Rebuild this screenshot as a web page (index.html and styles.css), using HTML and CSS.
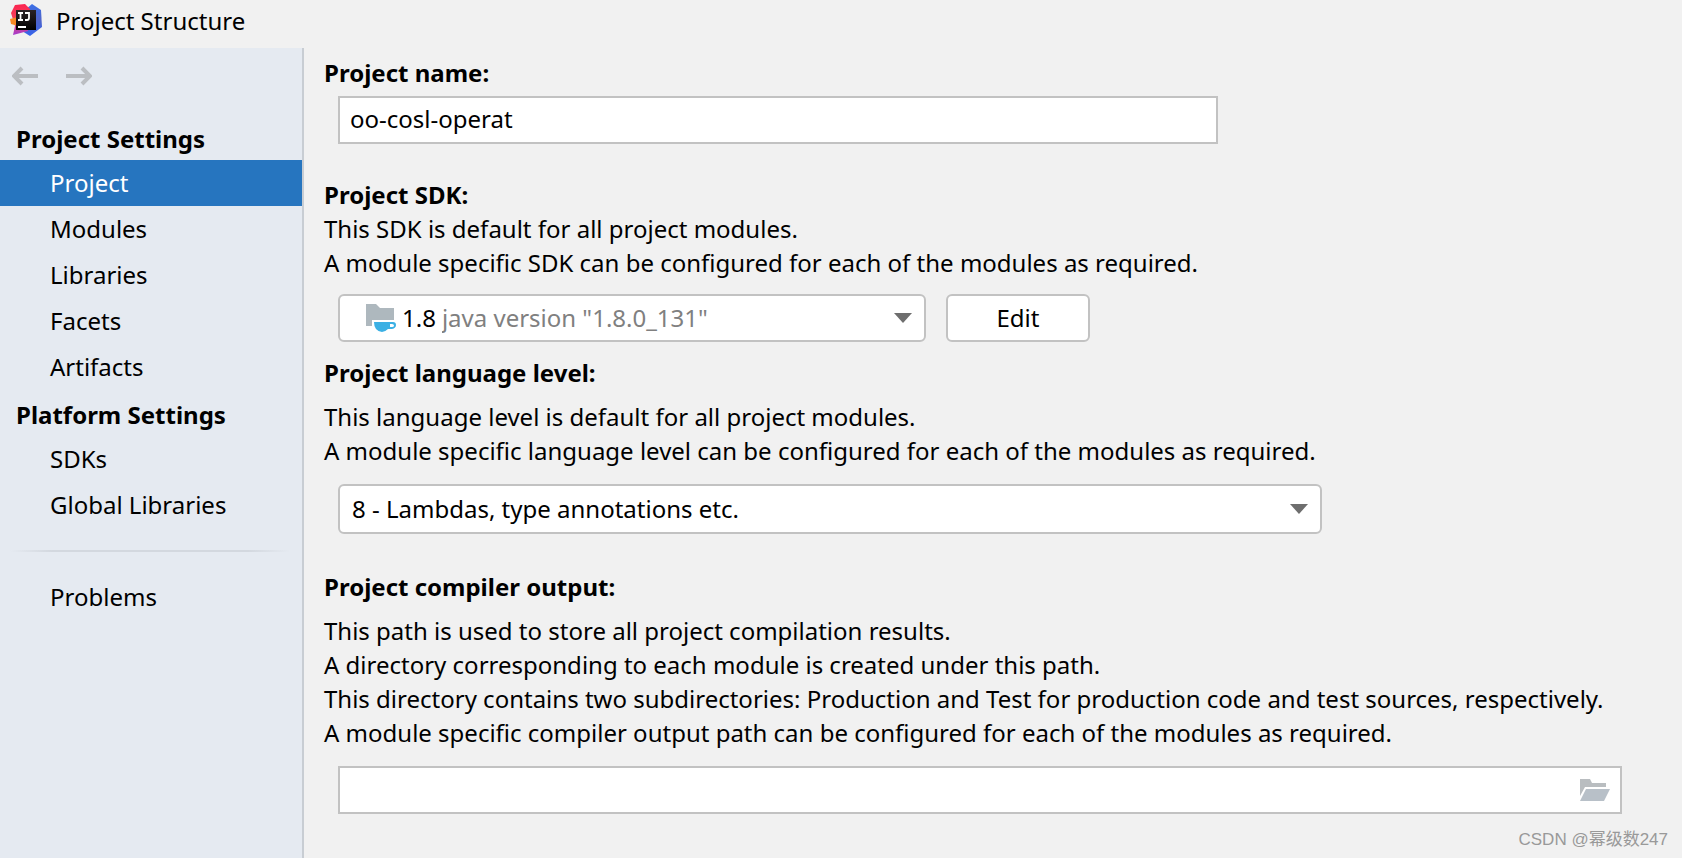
FILE: index.html
```html
<!DOCTYPE html>
<html lang="en">
<head>
<meta charset="utf-8">
<meta name="viewport" content="width=device-width, initial-scale=1">
<title>Project Structure</title>
<link rel="stylesheet" href="styles.css">
</head>
<body>
<div class="window">
  <header class="titlebar">
    <svg class="logo" viewBox="0 0 32 32" aria-hidden="true">
      <defs>
        <linearGradient id="blue" x1="0" y1="0" x2="0" y2="1"><stop offset="0" stop-color="#3a6fe8"/><stop offset="0.5" stop-color="#5064c8"/><stop offset="1" stop-color="#3564ee"/></linearGradient>
        <linearGradient id="red" x1="0" y1="0" x2="0" y2="1"><stop offset="0" stop-color="#fb2350"/><stop offset="0.5" stop-color="#f5455c"/><stop offset="1" stop-color="#a23bd0"/></linearGradient>
        <linearGradient id="ink" x1="0" y1="0" x2="0" y2="1"><stop offset="0" stop-color="#2b2426"/><stop offset="1" stop-color="#000"/></linearGradient>
      </defs>
      <path d="M22 0 31 6 32 23 20 32 12 27 15 6Z" fill="url(#blue)"/>
      <path d="M5 1 15 0 20 5 18 27 3 31 5 22 1 9Z" fill="url(#red)"/>
      <path d="M0 15 8 13V22L1 20Z" fill="#f88a25"/>
      <rect x="6" y="6" width="20" height="20" fill="url(#ink)"/>
      <path d="M8 9H13M8 16H13M10.500 9V16M15 9H19V14Q19 16 17 16H15M8 23H16" fill="none" stroke="#fff" stroke-width="1.800"/>
    </svg>
    <h1 class="title">Project Structure</h1>
  </header>

  <aside class="sidebar">
    <div class="history">
      <button class="history-btn" type="button" aria-label="Back">
        <svg class="arrow" viewBox="0 0 28 20"><path d="M26 10H3M10 2 2 10 10 18"/></svg>
      </button>
      <button class="history-btn" type="button" aria-label="Forward">
        <svg class="arrow" viewBox="0 0 28 20"><path d="M2 10H25M18 2 26 10 18 18"/></svg>
      </button>
    </div>
    <nav class="nav">
      <h2 class="nav-heading">Project Settings</h2>
      <a class="nav-item active" href="#project" aria-current="page">Project</a>
      <a class="nav-item" href="#modules">Modules</a>
      <a class="nav-item" href="#libraries">Libraries</a>
      <a class="nav-item" href="#facets">Facets</a>
      <a class="nav-item" href="#artifacts">Artifacts</a>
      <h2 class="nav-heading">Platform Settings</h2>
      <a class="nav-item" href="#sdks">SDKs</a>
      <a class="nav-item" href="#global-libraries">Global Libraries</a>
      <hr class="divider">
      <a class="nav-item" href="#problems">Problems</a>
    </nav>
  </aside>

  <main class="content">
    <section class="group group-name">
      <label class="label" for="name">Project name:</label>
      <input class="field" id="name" type="text" value="oo-cosl-operat">
    </section>

    <section class="group">
      <label class="label" for="sdk">Project SDK:</label>
      <p class="hint">This SDK is default for all project modules.<br>A module specific SDK can be configured for each of the modules as required.</p>
      <div class="row">
        <div class="combo combo-sdk">
          <svg class="sdk-icon" viewBox="0 0 30 28" aria-hidden="true">
            <path d="M0 0H10L14 4H28V16H6V22H0Z" fill="#aeb8be"/>
            <path d="M8 18H27Q30 18 30 21T26 25H22Q19 28 16 28Q8 27 8 18ZM24 20V23H26Q28 23 28 21.500T26 20Z" fill="#3bb0e4" fill-rule="evenodd"/>
          </svg>
          <label class="sdk-version" for="sdk">1.8</label>
          <select class="select select-muted" id="sdk"><option>java version "1.8.0_131"</option></select>
          <svg class="caret" viewBox="0 0 18 10" aria-hidden="true"><path d="M0 0H18L9 10Z"/></svg>
        </div>
        <button class="button" type="button">Edit</button>
      </div>
    </section>

    <section class="group group-level">
      <label class="label" for="level">Project language level:</label>
      <p class="hint">This language level is default for all project modules.<br>A module specific language level can be configured for each of the modules as required.</p>
      <div class="combo combo-level">
        <select class="select" id="level"><option>8 - Lambdas, type annotations etc.</option></select>
        <svg class="caret" viewBox="0 0 18 10" aria-hidden="true"><path d="M0 0H18L9 10Z"/></svg>
      </div>
    </section>

    <section class="group group-output">
      <label class="label" for="output">Project compiler output:</label>
      <p class="hint">This path is used to store all project compilation results.<br>A directory corresponding to each module is created under this path.<br>This directory contains two subdirectories: Production and Test for production code and test sources, respectively.<br>A module specific compiler output path can be configured for each of the modules as required.</p>
      <div class="path">
        <input class="path-input" id="output" type="text">
        <button class="browse" type="button" aria-label="Browse">
          <svg class="folder" viewBox="0 0 30 22"><path d="M0 0H10L12 4H26V8H5L0 17Z" fill="#b9bdc0"/><path d="M6 10H30L24 22H0Z" fill="#b8c0c8"/></svg>
        </button>
      </div>
    </section>
  </main>
  <footer class="watermark">CSDN @幂级数247</footer>
</div>
</body>
</html>
```
FILE: styles.css
```css
*,
*::before,
*::after {
  box-sizing: border-box;
}

body {
  margin: 0;
  background: #f1f1f1;
  color: #000;
  font: 24px/34px "Noto Sans", "Open Sans", "Noto Sans CJK SC", sans-serif;
}

.window {
  position: relative;
  display: grid;
  grid-template-columns: 304px 1fr;
  grid-template-rows: 48px 1fr;
  min-height: 100vh;
}

.titlebar {
  grid-column: 1 / -1;
  display: flex;
  gap: 14px;
  padding: 4px 10px;
}

.logo {
  width: 32px;
  height: 32px;
}

.title {
  margin: 0;
  font-size: 24px;
  font-weight: 400;
}

.sidebar {
  background: #e5eaf1;
  border-right: 2px solid #c8cdd3;
}

.history {
  display: flex;
  gap: 24px;
  height: 66px;
  padding: 18px 12px;
}

.history-btn,
.browse {
  display: flex;
  padding: 0;
  border: 0;
  background: none;
}

.arrow {
  width: 28px;
  height: 20px;
  fill: none;
  stroke: #bbbec2;
  stroke-width: 4;
}

.nav {
  display: flex;
  flex-direction: column;
}

.nav-heading {
  margin: 0;
  padding: 8px 16px 4px;
  font-size: 24px;
}

.nav-item {
  padding: 6px 50px;
  color: #000;
  text-decoration: none;
}

.nav-item.active {
  background: #2675bf;
  color: #fff;
}

.divider {
  width: 280px;
  height: 2px;
  margin: 22px 10px;
  border: 0;
  background: linear-gradient(90deg, transparent, #d3d8df 15%, #d3d8df 85%, transparent);
}

.content {
  padding: 8px 60px 44px 20px;
}

.group {
  display: flex;
  flex-direction: column;
  align-items: flex-start;
}

.label {
  font-weight: 700;
}

.hint {
  margin: 0;
}

.field,
.combo,
.path,
.button {
  height: 48px;
  border: 2px solid #c2c2c2;
  background: #fff;
}

.field,
.combo,
.path {
  margin-left: 14px;
}

.field {
  width: calc(100% - 14px);
  max-width: 880px;
  padding: 0 10px 4px;
  color: inherit;
  font: inherit;
}

.group-name {
  gap: 6px;
  margin-bottom: 34px;
}

.row {
  display: flex;
  gap: 20px;
  width: 100%;
  margin: 14px 0;
}

.combo {
  position: relative;
  display: flex;
  align-items: center;
  border-radius: 6px;
}

.combo-sdk {
  flex: 0 1 588px;
  padding-left: 26px;
}

.sdk-icon {
  width: 30px;
  height: 28px;
  margin-right: 6px;
}

.sdk-version {
  margin-right: 6px;
}

.select {
  flex: 1;
  min-width: 0;
  height: 100%;
  padding: 0 48px 0 12px;
  border: 0;
  background: none;
  color: inherit;
  font: inherit;
  appearance: none;
}

.select-muted {
  padding-left: 0;
  color: #808080;
}

.caret {
  position: absolute;
  right: 12px;
  width: 18px;
  height: 10px;
  fill: #6e6e6e;
  pointer-events: none;
}

.button {
  width: 144px;
  border-radius: 6px;
  color: inherit;
  font: inherit;
}

.group-level,
.group-output {
  gap: 10px;
}

.combo-level {
  width: calc(100% - 14px);
  max-width: 984px;
  height: 50px;
  margin-top: 6px;
}

.group-output {
  margin-top: 36px;
}

.path {
  display: flex;
  align-items: center;
  width: calc(100% - 14px);
  margin-top: 6px;
  padding-right: 10px;
}

.path-input {
  flex: 1;
  height: 100%;
  padding: 0 10px;
  border: 0;
  background: none;
  font: inherit;
}

.folder {
  width: 30px;
  height: 22px;
}

.watermark {
  position: absolute;
  right: 14px;
  bottom: 6px;
  color: #999;
  font: 17px/24px "Liberation Sans", "Noto Sans CJK SC", sans-serif;
}
```
